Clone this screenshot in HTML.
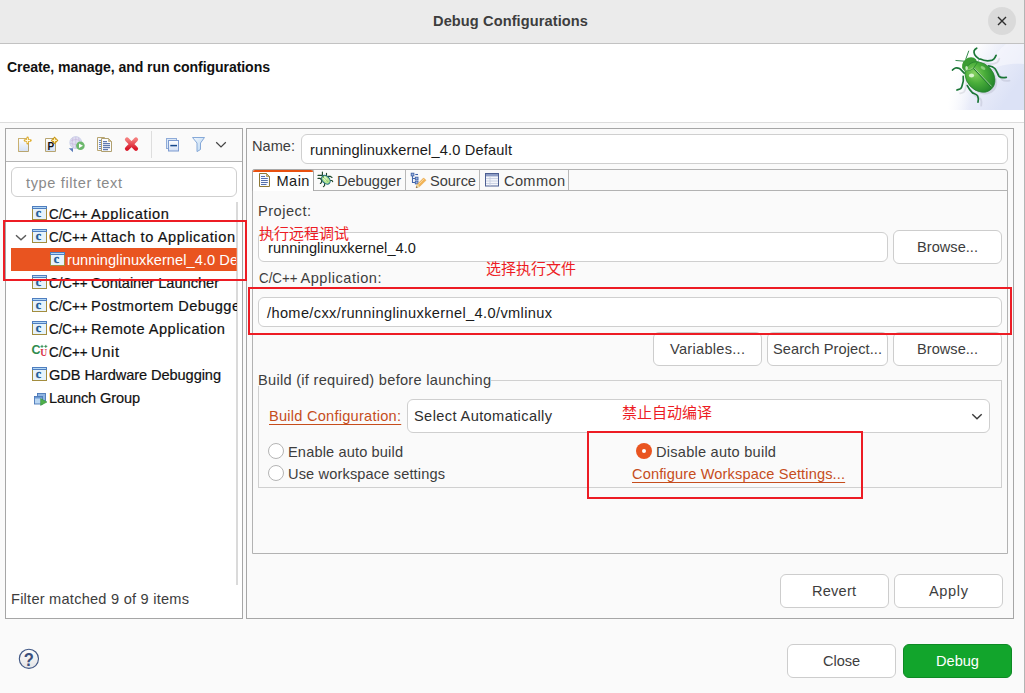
<!DOCTYPE html>
<html lang="en"><head><meta charset="utf-8"><title>Debug Configurations</title>
<style>
html,body{margin:0;padding:0;}
body{width:1025px;height:693px;overflow:hidden;background:#fafafa;font-family:"Liberation Sans","Noto Sans CJK SC",sans-serif;}
#root{position:relative;width:1025px;height:693px;overflow:hidden;background:#fafafa;}
#root div,#root svg{position:absolute;box-sizing:border-box;}
.t{position:absolute;white-space:pre;height:20px;line-height:20px;}
.btn{background:#fff;border:1px solid #cdcdcd;border-radius:6px;}
.inp{background:#fff;border:1px solid #cfcfcf;border-radius:6px;}
.redbox{border:2px solid #ed1c24;z-index:5;}
.radio{width:16px;height:16px;border-radius:50%;border:1px solid #b5b5b5;background:#fff;}

</style></head>
<body>
<div id="root">
<!-- title bar -->
<div style="left:0;top:0;width:1025px;height:44px;background:#ebebeb;border-bottom:1px solid #c2c2c2;"></div>
<div style="left:988px;top:7px;width:28px;height:28px;border-radius:50%;background:#dadada;"></div>
<svg style="left:996px;top:15px;" width="12" height="12" viewBox="996 15 12 12"><path d="M998 17L1006 25M1006 17L998 25" stroke="#2e2e2e" stroke-width="1.4" fill="none"/></svg>
<!-- header -->
<div style="left:0;top:44px;width:1024px;height:79px;background:#fff;border-bottom:1px solid #dcdcdc;"></div>
<!-- left panel -->
<div style="left:5px;top:128px;width:238px;height:491px;background:#fff;border:1px solid #a6a6a6;"></div>
<div style="left:6px;top:129px;width:236px;height:33px;background:#fafafa;border-bottom:1px solid #b4b4b4;"></div>
<div style="left:151px;top:131px;width:1px;height:27px;background:#dedede;"></div>
<div class="inp" style="left:11px;top:167px;width:226px;height:30px;"></div>
<div style="left:236px;top:202px;width:2px;height:383px;background:#dadada;"></div>
<div style="left:11px;top:248px;width:226px;height:23px;background:#e95420;"></div>
<div style="left:236px;top:248px;width:1px;height:23px;background:rgba(255,255,255,0.2);"></div>
<!-- right panel -->
<div style="left:246px;top:128px;width:768px;height:491px;background:#fafafa;border:1px solid #a6a6a6;"></div>
<div class="inp" style="left:301px;top:134px;width:707px;height:30px;"></div>
<!-- tab folder -->
<div style="left:252px;top:169px;width:756px;height:385px;background:#fafafa;border:1px solid #b2b2b2;border-radius:3px 3px 0 0;"></div>
<div style="left:313px;top:190px;width:694px;height:1px;background:#b2b2b2;"></div>
<div style="left:252px;top:169px;width:62px;height:22px;background:#fff;border:1px solid #a8a8a8;border-bottom:none;border-radius:3px 3px 0 0;"></div>
<div style="left:253px;top:170px;width:60px;height:2px;background:#e9500f;border-radius:2px 2px 0 0;"></div>
<div style="left:405px;top:170px;width:1px;height:20px;background:#b8b8b8;"></div>
<div style="left:479px;top:170px;width:1px;height:20px;background:#b8b8b8;"></div>
<div style="left:568px;top:170px;width:1px;height:20px;background:#b8b8b8;"></div>
<!-- project -->
<div class="inp" style="left:258px;top:232px;width:630px;height:30px;"></div>
<div class="btn" style="left:893px;top:230px;width:109px;height:34px;"></div>
<!-- app -->
<div class="inp" style="left:258px;top:297px;width:744px;height:30px;"></div>
<div class="btn" style="left:653px;top:332px;width:109px;height:34px;"></div>
<div class="btn" style="left:767px;top:332px;width:121px;height:34px;"></div>
<div class="btn" style="left:893px;top:332px;width:109px;height:34px;"></div>
<!-- group -->
<div style="left:258px;top:380px;width:744px;height:108px;border:1px solid #d0d0d0;"></div>
<div style="left:258px;top:372px;width:233px;height:14px;background:#fafafa;"></div>
<div class="inp" style="left:407px;top:399px;width:583px;height:34px;"></div>
<svg style="left:970px;top:411px;" width="14" height="11" viewBox="970 411 14 11"><path d="M972.3 414.2L977 418.8L981.7 414.2" stroke="#3a3a3a" stroke-width="1.4" fill="none"/></svg>
<div class="radio" style="left:268px;top:443px;"></div>
<div class="radio" style="left:268px;top:465px;"></div>
<div style="left:636px;top:443px;width:16px;height:16px;border-radius:50%;background:#e95420;"></div>
<div style="left:641.7px;top:448.7px;width:4.6px;height:4.6px;border-radius:50%;background:#fff;"></div>
<!-- red boxes -->
<div class="redbox" style="left:3px;top:220px;width:244px;height:61px;"></div>
<div class="redbox" style="left:248px;top:287px;width:764px;height:48px;"></div>
<div class="redbox" style="left:587px;top:431px;width:276px;height:68px;"></div>
<!-- revert/apply -->
<div class="btn" style="left:780px;top:574px;width:109px;height:34px;"></div>
<div class="btn" style="left:894px;top:574px;width:109px;height:34px;"></div>
<!-- bottom -->
<div class="btn" style="left:787px;top:644px;width:109px;height:34px;"></div>
<div style="left:903px;top:644px;width:109px;height:34px;background:#12a52c;border:1px solid #0d8a24;border-radius:6px;"></div>
<svg width="0" height="0" style="left:0;top:0;">
<defs>
<linearGradient id="gDoc" x1="0" y1="0" x2="0" y2="1"><stop offset="0" stop-color="#ffffff"/><stop offset="1" stop-color="#d3e0f5"/></linearGradient>
<linearGradient id="gX" x1="0" y1="0" x2="0" y2="1"><stop offset="0" stop-color="#f47a7a"/><stop offset="1" stop-color="#d8182a"/></linearGradient>
<linearGradient id="gFun" x1="0" y1="0" x2="1" y2="1"><stop offset="0" stop-color="#f2f8fe"/><stop offset="1" stop-color="#b5d3f0"/></linearGradient>
<linearGradient id="gHelp" x1="0" y1="0" x2="0" y2="1"><stop offset="0" stop-color="#fcfcfc"/><stop offset="1" stop-color="#e4e4e6"/></linearGradient>
<radialGradient id="gBug" cx="0.3" cy="0.55" r="0.75"><stop offset="0" stop-color="#86d060"/><stop offset="0.45" stop-color="#4aae3a"/><stop offset="0.85" stop-color="#2a8c2e"/><stop offset="1" stop-color="#1c7428"/></radialGradient>
<linearGradient id="gFade" x1="0" y1="0" x2="1" y2="0"><stop offset="0" stop-color="#fff" stop-opacity="1"/><stop offset="1" stop-color="#fff" stop-opacity="0"/></linearGradient>
<linearGradient id="gBan" x1="0.1" y1="0.05" x2="0.95" y2="0.55"><stop offset="0.2" stop-color="#ffffff"/><stop offset="0.6" stop-color="#e9ecf9"/><stop offset="1" stop-color="#dce2f6"/></linearGradient>
</defs></svg>
<!-- toolbar icons -->
<svg style="left:14px;top:132px;" width="232" height="26" viewBox="14 132 232 26">
<!-- new -->
<path d="M18.5 138.5H28.5V151.5H18.5Z" fill="url(#gDoc)" stroke="#b8a570"/>
<path d="M18.5 151.5V138.5H28.5" fill="none" stroke="#c9b070"/>
<path d="M27.6 137.6V143.4M24.8 140.5H30.6" stroke="#e0ae2e" stroke-width="2.3" stroke-linecap="round"/>
<path d="M27.6 138.2V142.8M25.4 140.5H30" stroke="#fffbe8" stroke-width="1"/>
<!-- proto -->
<path d="M45.5 138.5H55.5V151.5H45.5Z" fill="url(#gDoc)" stroke="#b8a570"/>
<text x="47.6" y="150" font-family="Liberation Sans, sans-serif" font-weight="bold" font-size="10" fill="#111">P</text>
<path d="M54.6 136.6L58.4 140.4L54.6 144.2L50.8 140.4Z" fill="#c8960f"/>
<path d="M54.6 138.2V142.6M52.4 140.4H56.8" stroke="#fff6d0" stroke-width="1.1"/>
<!-- globe -->
<circle cx="75.8" cy="142.6" r="6" fill="#dfe0f2" stroke="#c5cbe6" stroke-width="0.8"/>
<path d="M71 140.5Q75.8 138.5 80.5 140.5M70.3 143.5Q75.8 145.5 81.3 143.5M75.8 136.8V148.4M73 137.5Q71 142.6 73.5 148M78.5 137.5Q80.6 142.6 78 148" fill="none" stroke="#c9b8dc" stroke-width="0.7"/>
<circle cx="80.4" cy="145.7" r="4.3" fill="#6cb86c"/>
<path d="M79 143.5L83 145.7L79 147.9Z" fill="#fff"/>
<path d="M68.8 148.2H73V152.2Z" fill="#5b7cba"/>
<!-- duplicate -->
<path d="M97.5 137.5H104.5V150.5H97.5Z" fill="#f4f7fc" stroke="#b8a570"/>
<path d="M99 140.5H102M99 142.5H102M99 144.5H102M99 146.5H102M99 148.5H102" stroke="#6a86bd" stroke-width="1"/>
<path d="M101.5 138.5H108.5L111.5 141.5V151.5H101.5Z" fill="#fbfcff" stroke="#b0a070"/>
<path d="M108.5 138.5V141.5H111.5Z" fill="#d8c080" stroke="#b0a070" stroke-width="0.6"/>
<path d="M103 141.7H107M103 143.7H110M103 145.7H110M103 147.7H110M103 149.7H108" stroke="#3d5c9c" stroke-width="1"/>
<!-- delete -->
<path d="M127 139.5L136 148.7M136 139.5L127 148.7" stroke="url(#gX)" stroke-width="4.2" stroke-linecap="round"/>
<!-- collapse all -->
<rect x="166.5" y="138.5" width="10" height="10" fill="#dbe8f7" stroke="#8fabd8"/>
<rect x="168.5" y="140.5" width="10" height="10.5" fill="url(#gDoc)" stroke="#7d9bd0"/>
<path d="M170.3 145.6H177" stroke="#16478a" stroke-width="1.5"/>
<!-- funnel -->
<path d="M192.5 137.5H204.5L200.5 143V149.5L197 151.6V143Z" fill="url(#gFun)" stroke="#86a9d8" stroke-linejoin="round"/>
<!-- chevron -->
<path d="M216.2 142.3L221 147L225.8 142.3" fill="none" stroke="#444" stroke-width="1.25"/>
</svg>
<!-- tree chevron -->
<svg style="left:14px;top:232px;" width="14" height="10" viewBox="14 232 14 10"><path d="M16 235.2L21 239.8L26 235.2" fill="none" stroke="#5a5a5a" stroke-width="1.4"/></svg>
<!-- tree icons -->
<svg style="left:32px;top:206px;" width="15" height="14"><rect x="0.5" y="2.5" width="14" height="11" fill="#e6f3fc" stroke="#a38d3e"/>
<rect x="0" y="0" width="15" height="3" fill="#4f7ebf"/>
<rect x="1" y="1" width="13" height="1" fill="#b3d8f5"/>
<text x="3.8" y="11.2" font-family="Liberation Serif, serif" font-weight="bold" font-size="12" fill="#1f5a96" stroke="#1f5a96" stroke-width="0.35">c</text></svg>
<svg style="left:32px;top:229px;" width="15" height="14"><rect x="0.5" y="2.5" width="14" height="11" fill="#e6f3fc" stroke="#a38d3e"/>
<rect x="0" y="0" width="15" height="3" fill="#4f7ebf"/>
<rect x="1" y="1" width="13" height="1" fill="#b3d8f5"/>
<text x="3.8" y="11.2" font-family="Liberation Serif, serif" font-weight="bold" font-size="12" fill="#1f5a96" stroke="#1f5a96" stroke-width="0.35">c</text></svg>
<svg style="left:50px;top:252px;" width="15" height="14"><rect x="0.5" y="2.5" width="14" height="11" fill="#e6f3fc" stroke="#a38d3e"/>
<rect x="0" y="0" width="15" height="3" fill="#4f7ebf"/>
<rect x="1" y="1" width="13" height="1" fill="#b3d8f5"/>
<text x="3.8" y="11.2" font-family="Liberation Serif, serif" font-weight="bold" font-size="12" fill="#1f5a96" stroke="#1f5a96" stroke-width="0.35">c</text></svg>
<svg style="left:32px;top:275px;" width="15" height="14"><rect x="0.5" y="2.5" width="14" height="11" fill="#e6f3fc" stroke="#a38d3e"/>
<rect x="0" y="0" width="15" height="3" fill="#4f7ebf"/>
<rect x="1" y="1" width="13" height="1" fill="#b3d8f5"/>
<text x="3.8" y="11.2" font-family="Liberation Serif, serif" font-weight="bold" font-size="12" fill="#1f5a96" stroke="#1f5a96" stroke-width="0.35">c</text></svg>
<svg style="left:32px;top:298px;" width="15" height="14"><rect x="0.5" y="2.5" width="14" height="11" fill="#e6f3fc" stroke="#a38d3e"/>
<rect x="0" y="0" width="15" height="3" fill="#4f7ebf"/>
<rect x="1" y="1" width="13" height="1" fill="#b3d8f5"/>
<text x="3.8" y="11.2" font-family="Liberation Serif, serif" font-weight="bold" font-size="12" fill="#1f5a96" stroke="#1f5a96" stroke-width="0.35">c</text></svg>
<svg style="left:32px;top:321px;" width="15" height="14"><rect x="0.5" y="2.5" width="14" height="11" fill="#e6f3fc" stroke="#a38d3e"/>
<rect x="0" y="0" width="15" height="3" fill="#4f7ebf"/>
<rect x="1" y="1" width="13" height="1" fill="#b3d8f5"/>
<text x="3.8" y="11.2" font-family="Liberation Serif, serif" font-weight="bold" font-size="12" fill="#1f5a96" stroke="#1f5a96" stroke-width="0.35">c</text></svg>
<svg style="left:32px;top:367px;" width="15" height="14"><rect x="0.5" y="2.5" width="14" height="11" fill="#e6f3fc" stroke="#a38d3e"/>
<rect x="0" y="0" width="15" height="3" fill="#4f7ebf"/>
<rect x="1" y="1" width="13" height="1" fill="#b3d8f5"/>
<text x="3.8" y="11.2" font-family="Liberation Serif, serif" font-weight="bold" font-size="12" fill="#1f5a96" stroke="#1f5a96" stroke-width="0.35">c</text></svg>
<!-- C/C++ unit icon -->
<svg style="left:31px;top:343px;" width="18" height="14" viewBox="31 343 18 14">
<text x="31.6" y="353.6" font-family="Liberation Sans, sans-serif" font-weight="bold" font-size="12.5" fill="#2e8b4e">C</text>
<path d="M42 344.9V347.9M40.5 346.4H43.5M45.8 344.9V347.9M44.3 346.4H47.3" stroke="#2e8b4e" stroke-width="0.9"/>
<text x="40.2" y="355.6" font-family="Liberation Serif, serif" font-weight="bold" font-size="9.6" fill="#d83048">U</text>
</svg>
<!-- launch group icon -->
<svg style="left:33px;top:392px;" width="15" height="14" viewBox="33 392 15 14">
<rect x="37.5" y="393.5" width="8" height="7.5" fill="#8fb5e2" stroke="#4a78b8" stroke-width="0.9"/>
<rect x="34.5" y="396.5" width="8" height="7.5" fill="#b9d6f2" stroke="#4a78b8" stroke-width="0.9"/>
<rect x="35" y="397" width="7" height="1.5" fill="#6b98d2"/>
<path d="M40.6 398.6L47 402L40.6 405.4Z" fill="#4fb04a" stroke="#2f8a34" stroke-width="0.5"/>
</svg>
<!-- tab icons -->
<svg style="left:258px;top:172px;" width="14" height="16" viewBox="258 172 14 16">
<path d="M259.5 173.5H266.5L269.5 176.5V186.5H259.5Z" fill="#f7f9ff" stroke="#8f7836"/>
<path d="M266.5 173.5V176.5H269.5Z" fill="#d9c27a" stroke="#8f7836" stroke-width="0.6"/>
<path d="M261 176.5H265M261 178.5H267.8M261 180.5H267.8M261 182.5H267.8M261 184.5H266.5" stroke="#5470ad" stroke-width="1"/>
</svg>
<svg style="left:316px;top:170px;" width="19" height="19" viewBox="316 170 19 19">
<path d="M322.4 172V176M318 175.4H322.4M326.5 173.2V175.8M328 176.3H330.2L332 177.4M318 178.4H320.2L321.6 180V182.4L320.4 183.5M330 180.5H332L332.7 181.6M324.6 183V185.6L323.4 186.6" stroke="#1e472a" stroke-width="1.15" fill="none" stroke-linecap="round" stroke-linejoin="round"/>
<ellipse cx="325.9" cy="179.7" rx="5" ry="3.5" transform="rotate(47 325.9 179.7)" fill="#b5e495" stroke="#1f6d7c" stroke-width="1.1"/>
<ellipse cx="325" cy="178.6" rx="2.4" ry="1.5" transform="rotate(47 325 178.6)" fill="#e2f7cf"/>
<path d="M324 177.6L328.6 182.4" stroke="#6fbf55" stroke-width="0.7"/>
<circle cx="323.3" cy="177" r="0.7" fill="#2a7a20"/>
</svg>
<svg style="left:410px;top:172px;" width="17" height="17" viewBox="410 172 17 17">
<path d="M412.5 176V182.5H415.2M412.5 178.5H415.2" fill="none" stroke="#4466aa" stroke-width="1.1"/>
<path d="M415.3 174.5H418" stroke="#3f62a8" stroke-width="1.1"/>
<rect x="411.2" y="173.2" width="2.7" height="2.7" fill="#9db6e0" stroke="#3f62a8" stroke-width="0.9"/>
<rect x="415.3" y="177.2" width="2.7" height="2.7" fill="#9db6e0" stroke="#3f62a8" stroke-width="0.9"/>
<rect x="415.3" y="181.2" width="2.7" height="2.7" fill="#9db6e0" stroke="#3f62a8" stroke-width="0.9"/>
<path d="M416 187.8L417.3 184.3L423.6 177.9L426 180.3L419.6 186.6Z" fill="#f2b456" stroke="#e09a3a" stroke-width="0.5"/>
<path d="M418.4 184.6L424.4 178.6" stroke="#fbd9a0" stroke-width="0.9"/>
<path d="M417.3 184.3L419.6 186.6L416 187.8Z" fill="#eadfb0"/>
<path d="M416 187.8L416.6 186.2L417.6 187.2Z" fill="#4a2a18"/>
</svg>
<svg style="left:484px;top:172px;" width="16" height="16" viewBox="484 172 16 16">
<rect x="485.5" y="173.5" width="13" height="12.5" fill="#f4f6fb" stroke="#4d5f92"/>
<rect x="486" y="174" width="12" height="2.4" fill="#8d9cc4"/>
<path d="M486 178.5H498M486 181H498M486 183.5H498M490 176.5V186" stroke="#c3cbe0" stroke-width="0.8"/>
</svg>
<!-- help -->
<svg style="left:17px;top:647px;" width="24" height="24" viewBox="17 647 24 24">
<circle cx="28.9" cy="658.8" r="9.6" fill="url(#gHelp)" stroke="#3f5684" stroke-width="1.1"/>
<text x="28.9" y="665.6" text-anchor="middle" font-family="Liberation Sans, sans-serif" font-weight="bold" font-size="18.8" fill="#3a4f7d" transform="translate(28.9 0) scale(0.88 1) translate(-28.9 0)">?</text>
</svg>
<!-- banner bug -->
<svg style="left:948px;top:44px;" width="76" height="66" viewBox="0 0 76 66">
<rect width="76" height="66" fill="url(#gBan)"/>
<path d="M76 0H58C50 6 44 15 41 27C50 21 63 19 76 20Z" fill="#f8f9fe" opacity="0.6"/>
<rect width="22" height="66" fill="url(#gFade)"/>
<g opacity="0.13" transform="translate(3.2,3.4)" fill="none" stroke="#55556a" stroke-width="1.8" stroke-linecap="round">
<path d="M32.3 15.1C36 17 42 17.5 45.8 15.1C47 14 47.6 12.5 48.1 11.3M40.6 21.9C45 22.5 48 26 51 32.3C53 34 56 33.6 58.3 33.3M19.3 41.6C21 45 23 47.5 24.5 48.9C27 50 29 50.5 29.7 52C30.6 54 30.4 56 30 58.2M15.2 32.3C15.5 36 15 39 14.1 41.6C13.8 43 13.4 44 12.6 44.7C11.5 45.6 10 45.8 8.9 46"/>
<ellipse cx="32" cy="33" rx="15" ry="13" transform="rotate(47 32 33)" fill="#55556a" stroke="none"/>
</g>
<g fill="none" stroke="#1a7636" stroke-width="1.7" stroke-linecap="round" stroke-linejoin="round">
<path d="M31.3 15.1C29 13.5 27.2 12 26.6 10.5C26 9 25.8 8 26.1 6.8C26.6 5.6 27.6 4.8 28.7 4.2"/>
<path d="M32.3 15.1C36 17 39 17 41.7 16.7C43.5 16.5 44.8 16 45.8 15.1C47 14 47.6 12.5 48.1 11.3"/>
<path d="M40.6 21.9C43.5 22.2 45.5 23 46.9 24.5C49 27 49.5 30 51 32.3C53 34.2 56 33.8 58.3 33.3"/>
<path d="M16.2 29.2C14.5 27.5 13.2 25.5 11.5 24.5C10 23.8 8.8 23.6 7.4 24C6 24.5 5.2 25.2 4.5 26"/>
<path d="M15.2 32.3C15.8 36 15.2 39 14.1 41.6C13.8 43 13.4 44 12.6 44.7C11.5 45.6 10 45.8 8.9 46"/>
<path d="M19.3 41.6C21 45 23 47.5 24.5 48.9C27 50 29 50.4 29.7 52C30.6 54 30.4 56 30 58.2"/>
</g>
<path d="M17.8 15.1L20.7 7.1M16.2 17.2L7.9 16.5" stroke="#1f7d3a" stroke-width="0.9" stroke-linecap="round" fill="none"/>
<ellipse cx="21.6" cy="20.6" rx="8.2" ry="6.6" transform="rotate(-40 21.6 20.6)" fill="#3c9c34"/>
<ellipse cx="32" cy="33" rx="16.6" ry="13.4" transform="rotate(47 32 33)" fill="url(#gBug)" stroke="#237f2e" stroke-width="0.7"/>
<path d="M16.3 26.6C20 27 23.5 26.2 25.6 24C27.6 21.6 29 19 30.4 16.6" stroke="#2a8a30" stroke-width="0.9" fill="none"/>
<path d="M16.8 26.2C20 26.4 23 25.6 25.2 23.6" stroke="#bfe6a8" stroke-width="0.7" fill="none" opacity="0.8"/>
<path d="M25.6 24L43.2 42.7" stroke="#1f7a2c" stroke-width="1.5"/>
<path d="M26 23.8L43.6 42.4" stroke="#d9f2cc" stroke-width="0.7"/>
<ellipse cx="23.5" cy="31.5" rx="2.6" ry="2.1" fill="#eafbe0" opacity="0.85"/>
<ellipse cx="18.6" cy="24" rx="1.3" ry="2" fill="#eafbe0" opacity="0.8"/>
<ellipse cx="35" cy="24" rx="2.6" ry="1.4" transform="rotate(30 35 24)" fill="#c9efb5" opacity="0.55"/>
</svg>
<!-- right edge -->
<div style="left:1024px;top:0;width:1px;height:693px;background:#b4b4b4;"></div>

<span class="t" style="left:433px;top:11.0px;font-size:14.6px;color:#3d3d3d;font-weight:bold;letter-spacing:0.093px;">Debug Configurations</span>
<span class="t" style="left:7px;top:57.0px;font-size:14.1px;color:#111;font-weight:bold;letter-spacing:-0.088px;">Create, manage, and run configurations</span>
<span class="t" style="left:26px;top:172.5px;font-size:14.6px;color:#8a8a8a;font-weight:normal;letter-spacing:0.614px;">type filter text</span>
<span class="t" style="left:49px;top:204.0px;font-size:14.6px;color:#111;font-weight:normal;transform:scaleX(0.9150);transform-origin:0 50%;-webkit-text-stroke:0.2px #111;">C/C++</span>
<span class="t" style="left:91px;top:204.0px;font-size:14.6px;color:#111;font-weight:normal;letter-spacing:0.659px;-webkit-text-stroke:0.2px #111;">Application</span>
<span class="t" style="left:49px;top:227.0px;font-size:14.6px;color:#111;font-weight:normal;transform:scaleX(0.9150);transform-origin:0 50%;-webkit-text-stroke:0.2px #111;">C/C++</span>
<span class="t" style="left:91px;top:227.0px;font-size:14.6px;color:#111;font-weight:normal;letter-spacing:0.588px;-webkit-text-stroke:0.2px #111;">Attach to Application</span>
<span class="t" style="left:49px;top:273.0px;font-size:14.6px;color:#111;font-weight:normal;transform:scaleX(0.9150);transform-origin:0 50%;-webkit-text-stroke:0.2px #111;">C/C++</span>
<span class="t" style="left:91px;top:273.0px;font-size:14.6px;color:#111;font-weight:normal;letter-spacing:-0.011px;-webkit-text-stroke:0.2px #111;">Container Launcher</span>
<span class="t" style="left:49px;top:296.0px;font-size:14.6px;color:#111;font-weight:normal;transform:scaleX(0.9150);transform-origin:0 50%;-webkit-text-stroke:0.2px #111;">C/C++</span>
<span class="t" style="left:91px;top:296.0px;font-size:14.6px;color:#111;font-weight:normal;letter-spacing:0.414px;-webkit-text-stroke:0.2px #111;width:145.5px;overflow:hidden;">Postmortem Debugger</span>
<span class="t" style="left:49px;top:319.0px;font-size:14.6px;color:#111;font-weight:normal;transform:scaleX(0.9150);transform-origin:0 50%;-webkit-text-stroke:0.2px #111;">C/C++</span>
<span class="t" style="left:91px;top:319.0px;font-size:14.6px;color:#111;font-weight:normal;letter-spacing:0.485px;-webkit-text-stroke:0.2px #111;">Remote Application</span>
<span class="t" style="left:49px;top:342.0px;font-size:14.6px;color:#111;font-weight:normal;transform:scaleX(0.9150);transform-origin:0 50%;-webkit-text-stroke:0.2px #111;">C/C++</span>
<span class="t" style="left:91px;top:342.0px;font-size:14.6px;color:#111;font-weight:normal;letter-spacing:0.682px;-webkit-text-stroke:0.2px #111;">Unit</span>
<span class="t" style="left:49px;top:365.0px;font-size:14.6px;color:#111;font-weight:normal;letter-spacing:-0.076px;-webkit-text-stroke:0.2px #111;">GDB Hardware Debugging</span>
<span class="t" style="left:49px;top:388.0px;font-size:14.6px;color:#111;font-weight:normal;letter-spacing:-0.136px;-webkit-text-stroke:0.2px #111;">Launch Group</span>
<span class="t" style="left:67px;top:250.0px;font-size:14.6px;color:#fff;font-weight:normal;letter-spacing:0.060px;width:169px;overflow:hidden;">runninglinuxkernel_4.0 Default</span>
<span class="t" style="left:11px;top:588.5px;font-size:14.6px;color:#3d3d3d;font-weight:normal;letter-spacing:0.233px;">Filter matched 9 of 9 items</span>
<span class="t" style="left:252px;top:135.5px;font-size:14.6px;color:#3d3d3d;font-weight:normal;letter-spacing:0.004px;">Name:</span>
<span class="t" style="left:310px;top:139.5px;font-size:14.6px;color:#1a1a1a;font-weight:normal;letter-spacing:0.167px;">runninglinuxkernel_4.0 Default</span>
<span class="t" style="left:276.5px;top:170.5px;font-size:14.6px;color:#1a1a1a;font-weight:normal;letter-spacing:0.453px;">Main</span>
<span class="t" style="left:337px;top:170.5px;font-size:14.6px;color:#3d3d3d;font-weight:normal;letter-spacing:-0.016px;">Debugger</span>
<span class="t" style="left:430px;top:170.5px;font-size:14.6px;color:#3d3d3d;font-weight:normal;letter-spacing:-0.050px;">Source</span>
<span class="t" style="left:504px;top:170.5px;font-size:14.6px;color:#3d3d3d;font-weight:normal;letter-spacing:0.359px;">Common</span>
<span class="t" style="left:258px;top:200.5px;font-size:14.6px;color:#3d3d3d;font-weight:normal;letter-spacing:0.502px;">Project:</span>
<span class="t" style="left:259px;top:224.0px;font-size:15px;color:#ed1c24;font-weight:normal;letter-spacing:-0.003px;">执行远程调试</span>
<span class="t" style="left:268px;top:237.5px;font-size:14.6px;color:#1a1a1a;font-weight:normal;letter-spacing:0.054px;">runninglinuxkernel_4.0</span>
<span class="t" style="left:486px;top:259.0px;font-size:15px;color:#ed1c24;font-weight:normal;letter-spacing:-0.003px;">选择执行文件</span>
<span class="t" style="left:258.5px;top:267.5px;font-size:14.6px;color:#3d3d3d;font-weight:normal;transform:scaleX(0.9150);transform-origin:0 50%;">C/C++</span>
<span class="t" style="left:300.5px;top:267.5px;font-size:14.6px;color:#3d3d3d;font-weight:normal;letter-spacing:0.504px;">Application:</span>
<span class="t" style="left:267px;top:302.5px;font-size:14.6px;color:#1a1a1a;font-weight:normal;letter-spacing:0.361px;">/home/cxx/runninglinuxkernel_4.0/vmlinux</span>
<span class="t" style="left:917px;top:236.5px;font-size:14.6px;color:#3d3d3d;font-weight:normal;letter-spacing:0.021px;">Browse...</span>
<span class="t" style="left:670px;top:338.5px;font-size:14.6px;color:#3d3d3d;font-weight:normal;letter-spacing:0.280px;">Variables...</span>
<span class="t" style="left:773px;top:338.5px;font-size:14.6px;color:#3d3d3d;font-weight:normal;letter-spacing:0.069px;">Search Project...</span>
<span class="t" style="left:917px;top:338.5px;font-size:14.6px;color:#3d3d3d;font-weight:normal;letter-spacing:0.021px;">Browse...</span>
<span class="t" style="left:258px;top:369.5px;font-size:14.6px;color:#3d3d3d;font-weight:normal;letter-spacing:0.283px;">Build (if required) before launching</span>
<span class="t" style="left:269px;top:405.5px;font-size:14.6px;color:#c64d1c;font-weight:normal;letter-spacing:0.243px;text-decoration:underline;text-underline-offset:3px;text-decoration-skip-ink:none;">Build Configuration:</span>
<span class="t" style="left:414px;top:405.5px;font-size:14.6px;color:#2e2e2e;font-weight:normal;letter-spacing:0.389px;">Select Automatically</span>
<span class="t" style="left:622px;top:403.0px;font-size:15px;color:#ed1c24;font-weight:normal;letter-spacing:-0.003px;">禁止自动编译</span>
<span class="t" style="left:288px;top:441.5px;font-size:14.6px;color:#3d3d3d;font-weight:normal;letter-spacing:0.138px;">Enable auto build</span>
<span class="t" style="left:288px;top:463.5px;font-size:14.6px;color:#3d3d3d;font-weight:normal;letter-spacing:0.137px;">Use workspace settings</span>
<span class="t" style="left:656px;top:441.5px;font-size:14.6px;color:#3d3d3d;font-weight:normal;letter-spacing:0.233px;">Disable auto build</span>
<span class="t" style="left:632px;top:463.5px;font-size:14.6px;color:#c64d1c;font-weight:normal;letter-spacing:0.133px;text-decoration:underline;text-underline-offset:3px;text-decoration-skip-ink:none;">Configure Workspace Settings...</span>
<span class="t" style="left:812px;top:580.5px;font-size:14.6px;color:#3d3d3d;font-weight:normal;letter-spacing:0.203px;">Revert</span>
<span class="t" style="left:929px;top:580.5px;font-size:14.6px;color:#3d3d3d;font-weight:normal;letter-spacing:0.621px;">Apply</span>
<span class="t" style="left:823px;top:650.5px;font-size:14.6px;color:#3d3d3d;font-weight:normal;letter-spacing:-0.078px;">Close</span>
<span class="t" style="left:936px;top:650.5px;font-size:14.6px;color:#fff;font-weight:normal;letter-spacing:-0.004px;">Debug</span>
</div>
</body></html>
